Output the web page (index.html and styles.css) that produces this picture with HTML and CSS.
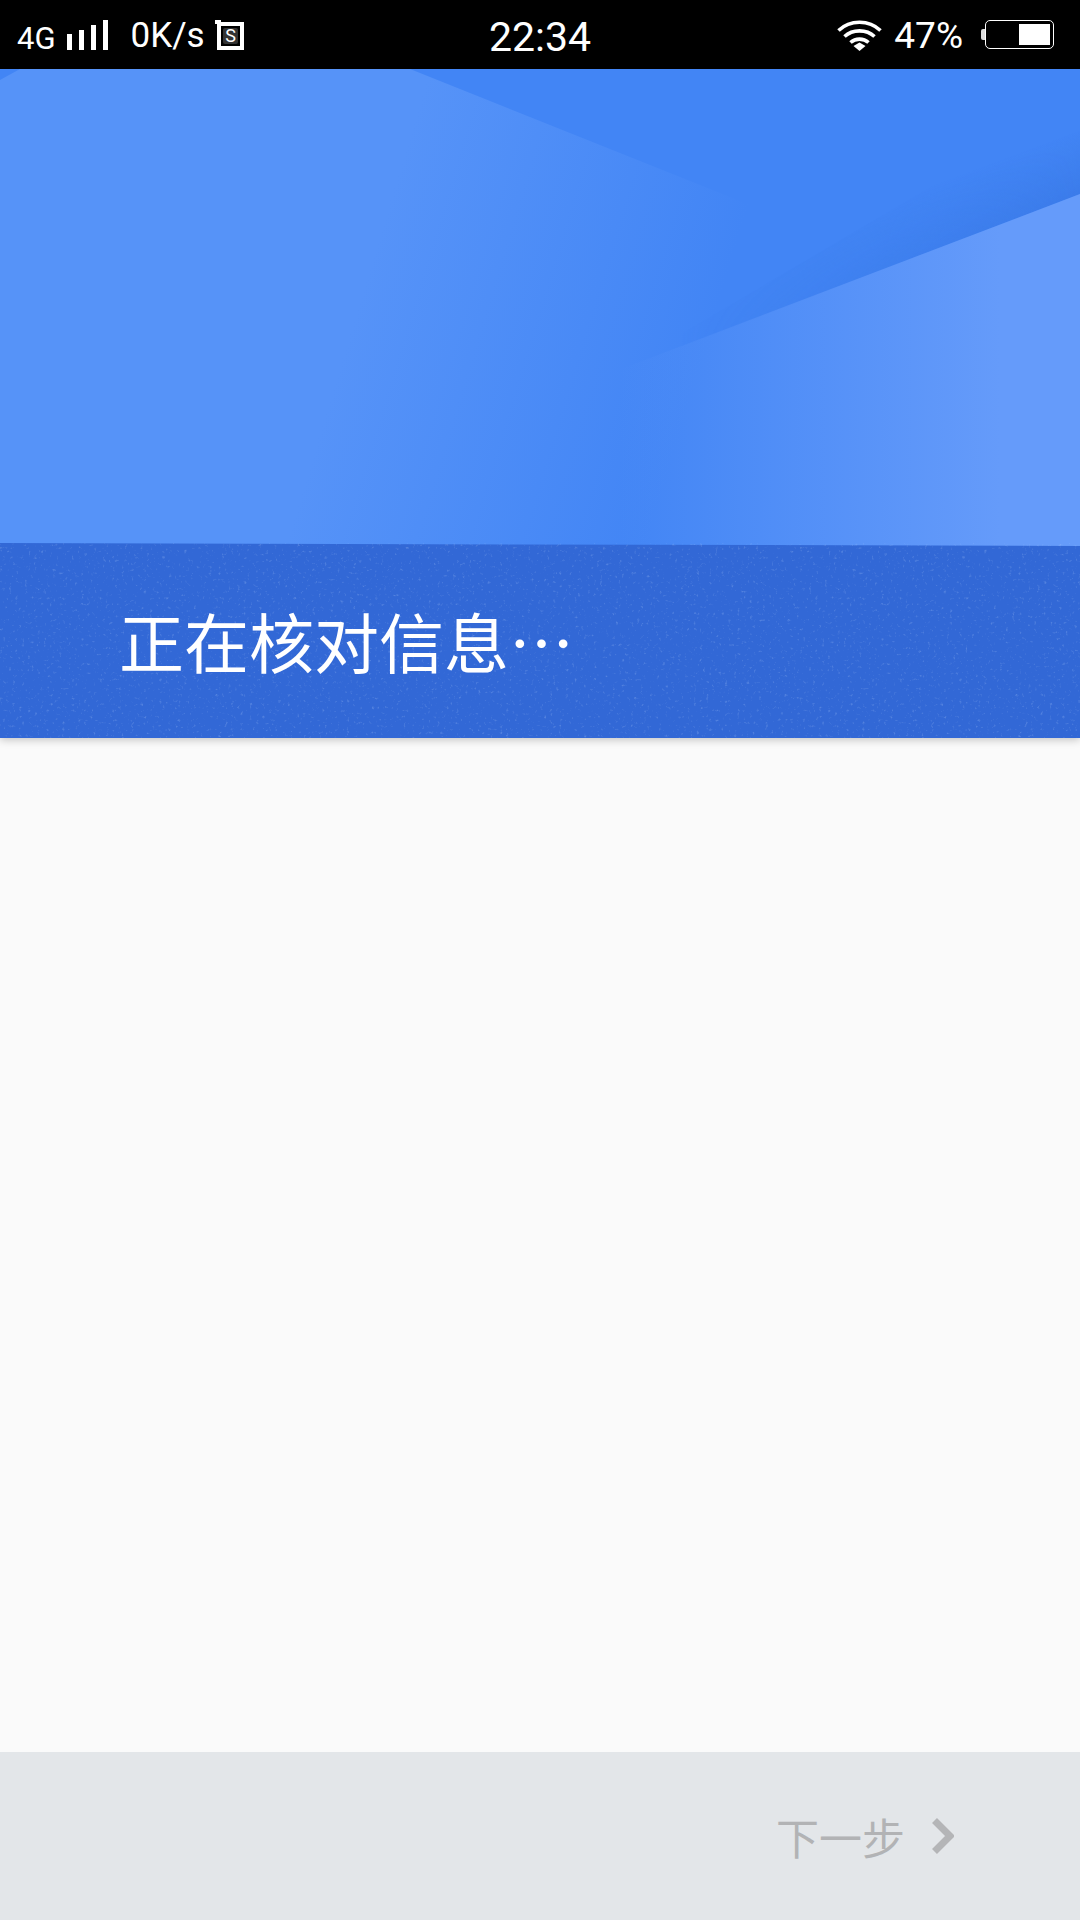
FILE: index.html
```html
<!DOCTYPE html>
<html lang="zh-CN">
<head>
    <meta charset="UTF-8">
    <meta name="viewport" content="width=device-width, initial-scale=1.0">
    <title>正在核对信息</title>
    <link rel="stylesheet" href="styles.css">
</head>
<body>
    <div class="page">
        <!-- 状态栏 -->
        <div class="status-bar">
            <div class="status-left">
                <span class="net-type">4G</span>
                <svg class="signal" width="41" height="30" viewBox="0 0 41 30" fill="#fff">
                    <rect x="0" y="14" width="5" height="16"/>
                    <rect x="12" y="10" width="5" height="20"/>
                    <rect x="24" y="5" width="5" height="25"/>
                    <rect x="36" y="0" width="5" height="30"/>
                </svg>
                <span class="net-speed">0K/s</span>
                <svg class="sim-icon" width="29" height="30" viewBox="0 0 29 30">
                    <path d="M0 0H6V2H29V30H2V4H0Z M6 6V26H25V6Z" fill="#fff" fill-rule="evenodd"/>
                    <rect x="8" y="8" width="15" height="16" rx="2" fill="#333"/>
                    <text x="15.500" y="22" text-anchor="middle" class="sim-letter">S</text>
                </svg>
            </div>
            <div class="status-time">22:34</div>
            <div class="status-right">
                <svg class="wifi" width="45" height="32" viewBox="0 0 45 32" fill="none" stroke="#fff" stroke-width="3.600">
                    <path d="M1.500 11.500C13 0.500 32 0.500 43.500 11.500"/>
                    <path d="M7.500 17.500C15.500 10 29.500 10 37.500 17.500"/>
                    <path d="M13.500 23.500C18.500 19 26.500 19 31.500 23.500"/>
                    <path d="M16.500 27L22.500 23.500L28.500 27L22.500 32Z" fill="#fff" stroke="none"/>
                </svg>
                <span class="battery-text">47%</span>
                <div class="battery">
                    <div class="battery-nub"></div>
                    <div class="battery-body">
                        <div class="battery-level"></div>
                    </div>
                </div>
            </div>
        </div>

        <!-- 顶部横幅 -->
        <div class="hero">
            <svg class="hero-art" width="1080" height="669" viewBox="0 0 1080 669">
                <defs>
                    <linearGradient id="leftFade" gradientUnits="userSpaceOnUse" x1="430" y1="0" x2="760" y2="100">
                        <stop offset="0" stop-color="#5693f8"/>
                        <stop offset="1" stop-color="#5693f8" stop-opacity="0"/>
                    </linearGradient>
                    <linearGradient id="rightFade" gradientUnits="userSpaceOnUse" x1="620" y1="0" x2="1000" y2="0">
                        <stop offset="0" stop-color="#659bfa" stop-opacity="0"/>
                        <stop offset="1" stop-color="#659bfa"/>
                    </linearGradient>
                    <linearGradient id="edgeShade" gradientUnits="userSpaceOnUse" x1="1059" y1="69" x2="1080" y2="125">
                        <stop offset="0" stop-color="#2f6bd6" stop-opacity="0"/>
                        <stop offset="1" stop-color="#2f6bd6" stop-opacity="0.35"/>
                    </linearGradient>
                    <linearGradient id="shadeFade" gradientUnits="userSpaceOnUse" x1="680" y1="0" x2="1080" y2="0">
                        <stop offset="0" stop-color="#000"/>
                        <stop offset="1" stop-color="#fff"/>
                    </linearGradient>
                    <mask id="shadeMask" maskUnits="userSpaceOnUse" x="0" y="0" width="1080" height="669">
                        <rect width="1080" height="669" fill="url(#shadeFade)"/>
                    </mask>
                    <filter id="grain" x="0" y="0" width="100%" height="100%">
                        <feTurbulence type="fractalNoise" baseFrequency="0.32" numOctaves="2" seed="4"/>
                        <feColorMatrix values="0 0 0 0 0.45  0 0 0 0 0.62  0 0 0 0 0.95  0 0 0 4 -2.500"/>
                    </filter>
                </defs>
                <rect width="1080" height="669" fill="#4285f5"/>
                <polygon points="20,0 410,0 860,180 860,480 0,480 0,11" fill="url(#leftFade)"/>
                <polygon points="1080,30 1080,125 620,301" fill="url(#edgeShade)" mask="url(#shadeMask)"/>
                <polygon points="1080,125 540,331 540,480 1080,480" fill="url(#rightFade)"/>
                <polygon points="0,474 1080,477 1080,669 0,669" fill="#3268d6"/>
                <polygon points="0,474 1080,477 1080,669 0,669" filter="url(#grain)" opacity="0.25"/>
            </svg>
            <h1 class="hero-title">正在核对信息…</h1>
        </div>

        <div class="content"></div>

        <!-- 底部操作栏 -->
        <div class="footer">
            <span class="next-text">下一步</span>
            <svg class="next-arrow" width="22" height="36" viewBox="0 0 22 36" fill="none" stroke="#b4b5b7" stroke-width="7">
                <path d="M2.500 2.500L18 18L2.500 33.500"/>
            </svg>
        </div>
    </div>
</body>
</html>
```

FILE: styles.css
```css
* {
    margin: 0;
    padding: 0;
    box-sizing: border-box;
}

body {
    background: #fafafa;
    font-family: Roboto, "Noto Sans CJK SC", sans-serif;
}

.page {
    display: flex;
    flex-direction: column;
    width: 1080px;
    height: 1920px;
    overflow: hidden;
}

/* 状态栏 */
.status-bar {
    display: grid;
    grid-template-columns: 1fr auto 1fr;
    align-items: center;
    height: 69px;
    background: #000;
    color: #fff;
}

.status-left,
.status-right {
    display: flex;
    align-items: center;
}

.status-left {
    padding-left: 17px;
}

.status-right {
    justify-content: flex-end;
    padding-right: 26px;
}

.net-type {
    margin-right: 11px;
    font-size: 31px;
    line-height: 30px;
    margin-top: 8px;
}

.signal {
    margin-top: 1px;
    margin-right: 23px;
}

.net-speed {
    margin-right: 10px;
    font-size: 35px;
    line-height: 40px;
    margin-top: 3px;
}

.sim-icon {
    margin-top: 1px;
}

.sim-letter {
    fill: #fff;
    font-family: Roboto, sans-serif;
    font-size: 18px;
}

.status-time {
    font-size: 41px;
    line-height: 46px;
    margin-top: 5px;
}

.wifi {
    margin-right: 12px;
}

.battery-text {
    margin-right: 18px;
    font-size: 37px;
    line-height: 40px;
    margin-top: 3px;
}

.battery {
    display: flex;
    align-items: center;
}

.battery-nub {
    width: 4px;
    height: 11px;
    background: #ddd;
    border-radius: 2px 0 0 2px;
}

.battery-body {
    display: flex;
    justify-content: flex-end;
    width: 69px;
    height: 29px;
    padding: 3px;
    border: 1.500px solid #fff;
    border-radius: 5px;
}

.battery-level {
    width: 31px;
    background: #fff;
}

/* 顶部横幅 */
.hero {
    position: relative;
    display: flex;
    align-items: flex-end;
    height: 669px;
    padding: 0 0 52px 119px;
    box-shadow: 0 2px 8px rgba(0, 0, 0, 0.22);
    z-index: 1;
}

.hero-art {
    position: absolute;
    top: 0;
    left: 0;
    display: block;
}

.hero-title {
    position: relative;
    color: #fff;
    font-family: "Noto Sans CJK SC", sans-serif;
    font-size: 65px;
    font-weight: 400;
    line-height: 92px;
    white-space: nowrap;
}

.content {
    flex: 1;
    background: #fafafa;
}

/* 底部操作栏 */
.footer {
    display: flex;
    justify-content: flex-end;
    align-items: center;
    gap: 27px;
    height: 168px;
    padding-right: 126px;
    background: #e3e6e9;
}

.next-text {
    color: #b2b3b5;
    font-family: "Noto Sans CJK SC", sans-serif;
    font-size: 43px;
    font-weight: 400;
    line-height: 50px;
}
```
